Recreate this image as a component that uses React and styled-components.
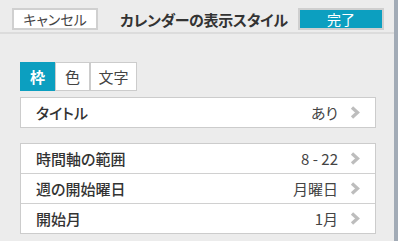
import React from 'react'
import styled, { createGlobalStyle } from 'styled-components'

const GlobalStyle = createGlobalStyle`
  html, body {
    margin: 0;
    padding: 0;
    background: #ececec;
  }
  body {
    font-family: "Noto Sans CJK JP", "Noto Sans", sans-serif;
    font-feature-settings: "palt";
    color: #333;
  }
`

const Chevron = () => (
  <svg width="10" height="13" viewBox="0 0 10 13">
    <polyline points="2,1.5 7.5,6.5 2,11.5" fill="none" stroke="#bdbdbd" strokeWidth="3.3" />
  </svg>
)

const App = () => {
  return (
    <Page>
      <GlobalStyle />
      <Main>
        <Header>
          <CancelButton>キャンセル</CancelButton>
          <Title>カレンダーの表示スタイル</Title>
          <DoneButton>完了</DoneButton>
        </Header>
        <Content>
          <Tabs>
            <Tab active w={35}>枠</Tab>
            <Tab w={35}>色</Tab>
            <Tab w={47}>文字</Tab>
          </Tabs>
          <Group>
            <Row>
              <Label>タイトル</Label>
              <Value>あり</Value>
              <Chevron />
            </Row>
          </Group>
          <Group>
            <Row>
              <Label>時間軸の範囲</Label>
              <Value>8 - 22</Value>
              <Chevron />
            </Row>
            <Row>
              <Label>週の開始曜日</Label>
              <Value>月曜日</Value>
              <Chevron />
            </Row>
            <Row>
              <Label>開始月</Label>
              <Value>1月</Value>
              <Chevron />
            </Row>
          </Group>
        </Content>
      </Main>
      <EdgeBar />
    </Page>
  )
}

export default App

const Page = styled.div`
  display: flex;
  width: 398px;
  height: 241px;
  background: #ececec;
  overflow: hidden;
`

const Main = styled.div`
  flex: 1;
  display: flex;
  flex-direction: column;
`

const EdgeBar = styled.div`
  width: 4px;
  flex-shrink: 0;
  background: #a2abb6;
`

const Header = styled.div`
  display: flex;
  flex-shrink: 0;
  align-items: center;
  height: 34px;
  padding: 7px 10px 1px 12px;
  border-bottom: 2px solid #dcdcdc;
  box-sizing: border-box;
`

const CancelButton = styled.div`
  width: 86px;
  height: 22px;
  box-sizing: border-box;
  border: 2px solid #d0d0d0;
  background: #fff;
  display: flex;
  align-items: center;
  justify-content: center;
  font-size: 14px;
  color: #444;
`

const Title = styled.div`
  margin-left: 22px;
  font-size: 15px;
  font-weight: bold;
  color: #333;
  letter-spacing: -0.3px;
`

const DoneButton = styled.div`
  margin-left: auto;
  width: 86px;
  height: 22px;
  box-sizing: border-box;
  border: 2px solid #cfcfcf;
  background: #0c9fc0;
  display: flex;
  align-items: center;
  justify-content: center;
  font-size: 14px;
  color: #fff;
`

const Content = styled.div`
  display: flex;
  flex-direction: column;
  gap: 15px;
  padding: 28px 18px 0 20px;
`

const Tabs = styled.div`
  display: flex;
  margin-bottom: -9px;
`

const Tab = styled.div`
  width: ${p => p.w}px;
  height: 29px;
  box-sizing: border-box;
  border: 1px solid ${p => (p.active ? '#0c9fc0' : '#cccccc')};
  background: ${p => (p.active ? '#0c9fc0' : '#fff')};
  color: ${p => (p.active ? '#fff' : '#444')};
  font-weight: ${p => (p.active ? 'bold' : 'normal')};
  font-size: 15px;
  display: flex;
  align-items: center;
  justify-content: center;
`

const Group = styled.div`
  background: #fff;
  border: 1px solid #cccccc;
`

const Row = styled.div`
  display: flex;
  align-items: center;
  height: 29px;
  padding: 0 15px 0 15px;
  & + & {
    border-top: 1px solid #d0d0d0;
  }
`

const Label = styled.div`
  flex: 1;
  font-size: 15px;
  font-weight: 500;
  color: #333;
`

const Value = styled.div`
  font-size: 15px;
  color: #444;
  margin-right: 12px;
`
